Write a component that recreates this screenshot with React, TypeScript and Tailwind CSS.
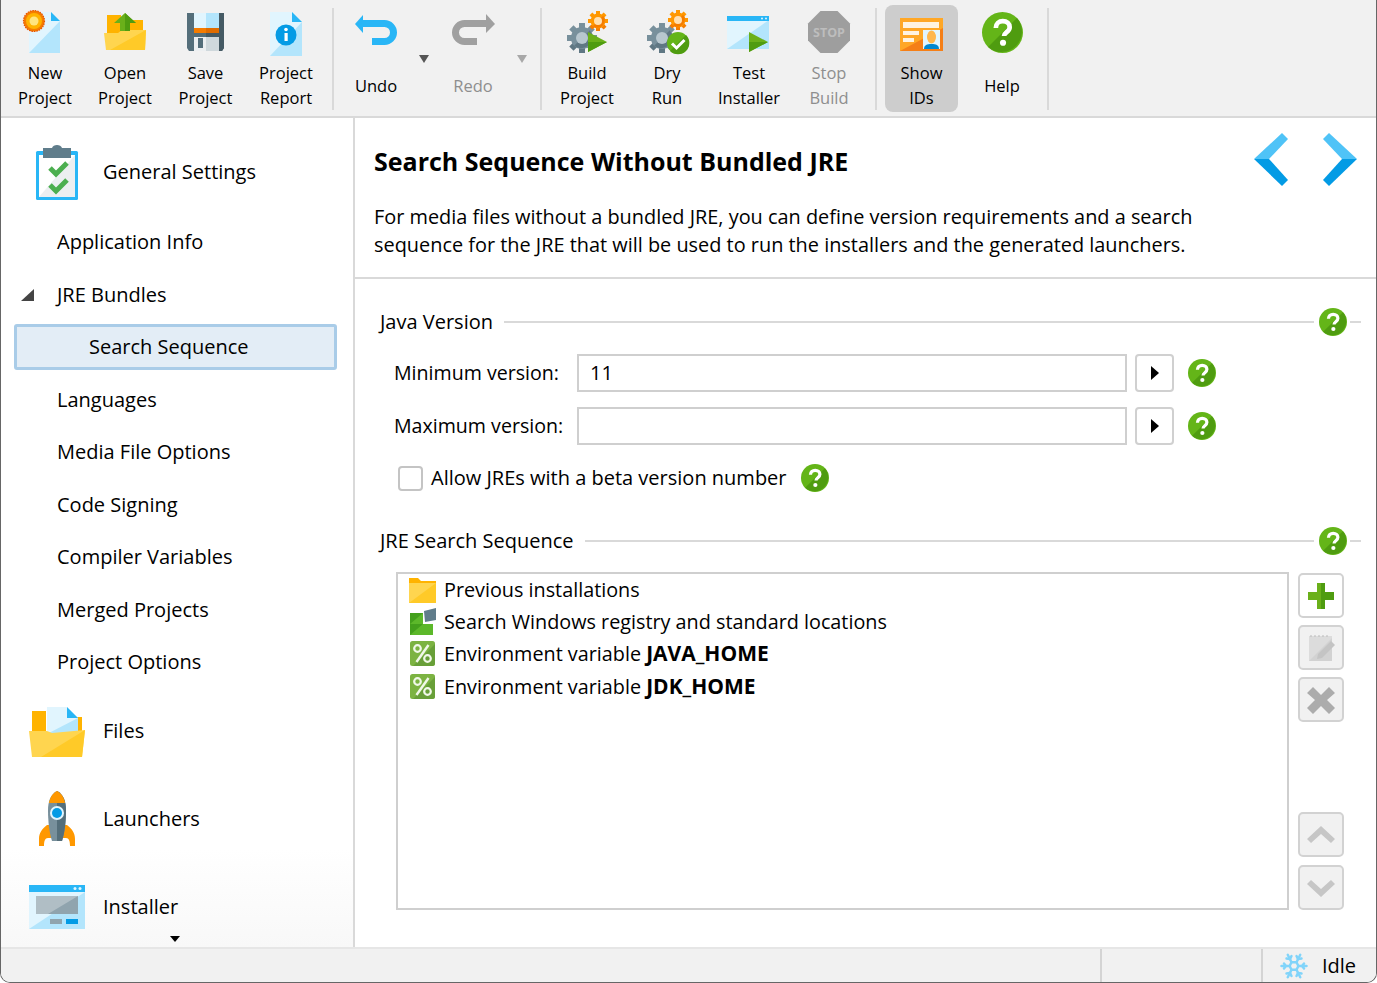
import { Snowflake } from 'lucide-react'
import type { ReactNode } from 'react'

const ANGLES = [0, 45, 90, 135, 180, 225, 270, 315]

function Gear({ cx, cy, r, fill, dark, hole }: { cx: number; cy: number; r: number; fill: string; dark: string; hole: string }) {
  return (
    <g>
      {ANGLES.map((a) => (
        <rect key={a} x={cx - r * 0.2} y={cy - r} width={r * 0.4} height={r * 0.4} fill={a > 90 && a < 270 ? dark : fill} transform={`rotate(${a} ${cx} ${cy})`} />
      ))}
      <circle cx={cx} cy={cy} r={r * 0.74} fill={fill} />
      <path d={`M${cx + r * 0.52} ${cy - r * 0.52}A${r * 0.74} ${r * 0.74} 0 0 1 ${cx - r * 0.52} ${cy + r * 0.52}Z`} fill={dark} />
      <circle cx={cx} cy={cy} r={r * 0.4} fill={hole} />
    </g>
  )
}

function HelpDot({ size = 28 }: { size?: number }) {
  return (
    <svg width={size} height={size} viewBox="0 0 40 40" className="shrink-0">
      <circle cx="20" cy="20" r="20" fill="#64b518" />
      <path d="M34.100 5.900A20 20 0 0 1 5.900 34.100Z" fill="#4f9c10" />
      <path d="M13.500 15.500c0-4 3-6.500 6.800-6.500 3.900 0 6.700 2.400 6.700 5.800 0 4.700-5.500 4.800-5.500 8.700" fill="none" stroke="#fff" strokeWidth="4.600" />
      <circle cx="20.500" cy="30" r="3" fill="#fff" />
    </svg>
  )
}

function Doc({ children }: { children?: ReactNode }) {
  return (
    <>
      <path d="M8 4h22l9 9v32H8Z" fill="#e1f5fe" />
      <path d="M8 45 39 13v32Z" fill="#b3e5fc" />
      <path d="M30 4l9 9h-9Z" fill="#29b6f6" />
      {children}
    </>
  )
}

const icons: Record<string, ReactNode> = {
  new: (
    <Doc>
      <circle cx="13" cy="13" r="10.500" fill="#f57c00" strokeDasharray="1.500 1" stroke="#e65100" strokeWidth="1.200" />
      <circle cx="13" cy="13" r="8" fill="#ffb300" />
      <circle cx="13" cy="13" r="4.500" fill="#ffe57f" />
    </Doc>
  ),
  open: (
    <>
      <path d="M6 7h14v5h22v14H6Z" fill="#ffb300" />
      <path d="M3 25h14l4-3h24l-1 20H5Z" fill="#ffd54f" />
      <path d="M45 22 44 42H9Z" fill="#ffca28" />
      <path d="M24 5l11 10h-6v8h-10v-8h-6Z" fill="#6ab01a" />
      <path d="M24 5l11 10h-6v8h-5Z" fill="#4f9c10" />
    </>
  ),
  save: (
    <>
      <path d="M5 5h37v35l-2 3H7l-2-3Z" fill="#546e7a" />
      <path d="M24 5h18v35l-2 3H24Z" fill="#455a64" />
      <rect x="12" y="5" width="12" height="20" fill="#e1f5fe" />
      <rect x="24" y="5" width="13" height="20" fill="#b3e5fc" />
      <rect x="12" y="20" width="12" height="5" fill="#f57c00" />
      <rect x="24" y="20" width="13" height="5" fill="#e06c00" />
      <rect x="12" y="29" width="12" height="14" fill="#eceff1" />
      <rect x="24" y="29" width="13" height="14" fill="#cfd8dc" />
      <rect x="16" y="30" width="5" height="10" fill="#546e7a" />
    </>
  ),
  report: (
    <>
      <path d="M8 4h22l10 10v34H8Z" fill="#e1f5fe" />
      <path d="M8 48 40 14v34Z" fill="#b3e5fc" />
      <path d="M30 4l10 10H30Z" fill="#29b6f6" />
      <circle cx="24" cy="27" r="10.500" fill="#039be5" />
      <circle cx="24" cy="21.500" r="1.800" fill="#fff" />
      <rect x="22.500" y="25" width="3.200" height="8" fill="#fff" />
    </>
  ),
  undo: (
    <>
      <path d="M10 15.500h22.500a9 9 0 0 1 0 18H20" fill="none" stroke="#29b6f6" strokeWidth="7" />
      <path d="M3 16 11 7v18Z" fill="#29b6f6" />
    </>
  ),
  redo: (
    <>
      <path d="M38 15.500H15.500a9 9 0 0 0 0 18H28" fill="none" stroke="#a0a0a0" strokeWidth="7" />
      <path d="M46 16 37 6v19Z" fill="#a0a0a0" />
    </>
  ),
  build: (
    <>
      <Gear cx={19} cy={30} r={15} fill="#78909c" dark="#5f7783" hole="#b8c7cf" />
      <Gear cx={35} cy={13} r={10} fill="#ff9800" dark="#f57c00" hole="#ffe0b2" />
      <path d="M25 24 44 34 25 44Z" fill="#6ab01a" />
      <path d="M25 44 44 34H25Z" fill="#4f9c10" />
    </>
  ),
  dry: (
    <>
      <Gear cx={19} cy={30} r={15} fill="#78909c" dark="#5f7783" hole="#b8c7cf" />
      <Gear cx={35} cy={12} r={10} fill="#ff9800" dark="#f57c00" hole="#ffe0b2" />
      <circle cx="35" cy="35" r="11" fill="#64b518" />
      <path d="M43 27A11 11 0 0 1 27 43Z" fill="#4f9c10" />
      <path d="M29 35.500l4.500 4.500 8-8" fill="none" stroke="#fff" strokeWidth="3" />
    </>
  ),
  test: (
    <>
      <rect x="2" y="8" width="42" height="33" fill="#e1f5fe" />
      <path d="M2 41 44 12v29Z" fill="#b3e5fc" />
      <rect x="2" y="8" width="42" height="5" fill="#29b6f6" />
      <circle cx="37" cy="10.500" r="1" fill="#e1f5fe" />
      <circle cx="41" cy="10.500" r="1" fill="#e1f5fe" />
      <path d="M24 24 43 34 24 44Z" fill="#6ab01a" />
      <path d="M24 44 43 34H24Z" fill="#4f9c10" />
    </>
  ),
  stop: (
    <>
      <path d="M15.500 3h17L45 15.500v17L32.500 45h-17L3 32.500v-17Z" fill="#9e9e9e" />
      <text x="24" y="28.500" textAnchor="middle" fontSize="12.500" fontWeight="700" fill="#bdbdbd" fontFamily="'Open Sans', sans-serif">STOP</text>
    </>
  ),
  ids: (
    <>
      <rect x="2" y="10" width="43" height="33" fill="#ffa726" />
      <path d="M2 43 45 20v23Z" fill="#f57f17" />
      <rect x="5" y="14" width="36" height="6" fill="#fff3e0" />
      <rect x="5" y="23" width="16" height="4" fill="#fff3e0" />
      <rect x="5" y="30" width="11" height="4" fill="#fff3e0" />
      <rect x="25" y="22" width="17" height="19" fill="#e1f5fe" />
      <ellipse cx="33.500" cy="29" rx="4.500" ry="6.500" fill="#ffb74d" />
      <path d="M26 41c0-4 3-5 7.500-5s7.500 1 7.500 5Z" fill="#0288d1" />
    </>
  ),
}

function ToolIcon({ name }: { name: string }) {
  return (
    <svg width="48" height="48" viewBox="0 0 48 48">
      {icons[name]}
    </svg>
  )
}

function ToolButton({ icon, label, width, off, active }: { icon: string; label: ReactNode; width: string; off?: boolean; active?: boolean }) {
  return (
    <div className={`flex flex-col items-center ${width} ${active ? 'mt-[5px] h-[107px] rounded-lg bg-[#cdcdcd] pt-[3px]' : 'pt-2'}`}>
      {icon === 'help' ? (
        <div className="flex h-12 w-12 items-center justify-center">
          <HelpDot size={41} />
        </div>
      ) : (
        <ToolIcon name={icon} />
      )}
      <div className={`mt-[4px] flex h-[50px] items-center text-center text-[16.500px] leading-[25px] ${off ? 'text-[#8e8e8e]' : 'text-black'}`}>
        <span>{label}</span>
      </div>
    </div>
  )
}

const Sep = ({ className }: { className: string }) => <div className={`mt-2 h-[102px] w-[2px] shrink-0 bg-[#d9d9d9] ${className}`} />

function Drop({ off, className }: { off?: boolean; className: string }) {
  return (
    <div className={`flex w-4 shrink-0 justify-center pt-[55px] ${className}`}>
      <div className={`h-0 w-0 border-x-[5px] border-t-[8px] border-x-transparent ${off ? 'border-t-[#a8a8a8]' : 'border-t-[#555]'}`} />
    </div>
  )
}

const NAV = ['Application Info', 'JRE Bundles', 'Search Sequence', 'Languages', 'Media File Options', 'Code Signing', 'Compiler Variables', 'Merged Projects', 'Project Options']

function NavRow({ label }: { label: string }) {
  if (label === 'Search Sequence') {
    return (
      <div className="flex h-[52.500px] items-center">
        <div className="ml-[13px] -mt-px flex h-[46px] w-[323px] items-center rounded-[3px] border-[3px] border-[#a9cce8] bg-[#e3edf6] pl-[72px] text-black">{label}</div>
      </div>
    )
  }
  return (
    <div className="relative flex h-[52.500px] items-center pl-[56px] text-black">
      {label === 'JRE Bundles' && (
        <svg width="13" height="12" viewBox="0 0 13 12" className="absolute left-[20px] top-[20px]">
          <path d="M13 0v12H0Z" fill="#444" />
        </svg>
      )}
      {label}
    </div>
  )
}

function GroupIcon({ children, h = 60 }: { children: ReactNode; h?: number }) {
  return (
    <svg width="56" height={h} viewBox={`0 0 56 ${h}`} className="shrink-0">
      {children}
    </svg>
  )
}

function GroupRow({ icon, label, className = '' }: { icon: ReactNode; label: string; className?: string }) {
  return (
    <div className={`flex h-[60px] items-center pl-[28px] text-black ${className}`}>
      {icon}
      <span className="ml-[18px]">{label}</span>
    </div>
  )
}

function GroupTitle({ label }: { label: string }) {
  return (
    <div className="ml-[25px] mr-[15px] flex h-[28px] items-center text-black">
      <span>{label}</span>
      <div className="ml-[11px] h-[2px] flex-1 bg-[#d9d9d9]" />
      <div className="ml-[5px] mr-[3px]">
        <HelpDot />
      </div>
      <div className="h-[2px] w-[11px] bg-[#d9d9d9]" />
    </div>
  )
}

function VersionRow({ label, value, className }: { label: string; value?: string; className: string }) {
  return (
    <div className={`ml-[39px] flex items-center ${className}`}>
      <span className="w-[183px] shrink-0 text-[19.600px] text-black">{label}</span>
      <div className="flex h-[38px] w-[550px] items-center border-2 border-[#cfcfcf] pl-[11px] text-black">{value}</div>
      <div className="ml-[8px] flex h-[38px] w-[39px] items-center justify-center rounded-[4px] border-2 border-[#d0d0d0]">
        <div className="h-0 w-0 border-y-[7px] border-l-[8px] border-y-transparent border-l-black" />
      </div>
      <div className="ml-[14px]">
        <HelpDot />
      </div>
    </div>
  )
}

function SideButton({ children, on, className = '' }: { children: ReactNode; on?: boolean; className?: string }) {
  return (
    <div className={`flex h-[45px] w-[46px] items-center justify-center rounded-[5px] border-2 border-[#d2d2d2] ${on ? 'bg-white' : 'bg-[#f1f1f1]'} ${className}`}>
      <svg width="30" height="30" viewBox="0 0 30 30">
        {children}
      </svg>
    </div>
  )
}

const Percent = () => (
  <svg width="27" height="25" viewBox="-1 0 27 25" className="shrink-0">
    <rect width="25" height="25" rx="2.500" fill="#7cb342" />
    <path d="M25 3v19a3 3 0 0 1-3 3H3Z" fill="#689f38" />
    <circle cx="7.500" cy="7.500" r="3.300" fill="none" stroke="#f1f8e9" strokeWidth="2.200" />
    <circle cx="17.500" cy="17.500" r="3.300" fill="none" stroke="#f1f8e9" strokeWidth="2.200" />
    <path d="M18.500 4 6.500 21" stroke="#f1f8e9" strokeWidth="2.400" />
  </svg>
)

export default function App() {
  return (
    <div className="flex h-[983px] w-[1377px] flex-col overflow-hidden rounded-b-[10px] border-x border-b border-[#666] bg-white font-['Open_Sans',sans-serif] text-[20px]">
      {/* toolbar */}
      <div className="flex h-[118px] shrink-0 border-b-2 border-[#d9d9d9] bg-[#f1f1f1] pl-[4px]">
        <ToolButton icon="new" width="w-[80px]" label={<>New<br />Project</>} />
        <ToolButton icon="open" width="w-[80px]" label={<>Open<br />Project</>} />
        <ToolButton icon="save" width="w-[81px]" label={<>Save<br />Project</>} />
        <ToolButton icon="report" width="w-[80px]" label={<>Project<br />Report</>} />
        <Sep className="ml-[6px]" />
        <ToolButton icon="undo" width="w-[80px] ml-[2px]" label="Undo" />
        <Drop className="" />
        <ToolButton icon="redo" width="w-[80px] ml-[1px]" label="Redo" off />
        <Drop off className="ml-px" />
        <Sep className="ml-[10px]" />
        <ToolButton icon="build" width="w-[80px] ml-[5px]" label={<>Build<br />Project</>} />
        <ToolButton icon="dry" width="w-[80px]" label={<>Dry<br />Run</>} />
        <ToolButton icon="test" width="w-[80px] ml-[2px]" label={<>Test<br />Installer</>} />
        <ToolButton icon="stop" width="w-[80px]" label={<>Stop<br />Build</>} off />
        <Sep className="ml-[6px]" />
        <ToolButton icon="ids" width="w-[73px] ml-[8px]" label={<>Show<br />IDs</>} active />
        <ToolButton icon="help" width="w-[80px] ml-[4px]" label="Help" />
        <Sep className="ml-[5px]" />
      </div>

      <div className="flex min-h-0 flex-1">
        {/* sidebar */}
        <div className="flex w-[354px] shrink-0 flex-col border-r-2 border-[#d9d9d9]">
          <GroupRow
            className="mt-[24px]"
            label="General Settings"
            icon={
              <GroupIcon>
                <rect x="7" y="9" width="42" height="49" rx="1.500" fill="#29b6f6" />
                <rect x="10" y="13" width="36" height="42" fill="#fff" />
                <path d="M46 13v42H10Z" fill="#eceff1" />
                <path d="M14 6h9c1-4 9-4 10 0h9v10H14Z" fill="#607d8b" />
                <path d="M21 26l6 6 11-11M21 43l6 6 11-11" fill="none" stroke="#4caf50" strokeWidth="5" />
              </GroupIcon>
            }
          />
          <div className="mt-[14px]">
            {NAV.map((n) => (
              <NavRow key={n} label={n} />
            ))}
          </div>
          <GroupRow
            className="mt-[12px]"
            label="Files"
            icon={
              <GroupIcon>
                <path d="M3 10h14v22H3ZM44 16h9v16h-9Z" fill="#ffb300" />
                <path d="M18 6h20l11 11v16H18Z" fill="#e1f5fe" />
                <path d="M18 33 49 17v16Z" fill="#b3e5fc" />
                <path d="M38 6l11 11H38Z" fill="#29b6f6" />
                <path d="M0 30h18l5 2 33-3-3 27H3Z" fill="#ffd54f" />
                <path d="M56 29 53 56H12Z" fill="#ffca28" />
              </GroupIcon>
            }
          />
          <GroupRow
            className="mt-[28px]"
            label="Launchers"
            icon={
              <GroupIcon>
                <path d="M10 57v-7c0-6 3-10 8-14l20 0c5 4 8 8 8 14v7h-5c0-5-1-8-4-8H19c-3 0-4 3-4 8Z" fill="#ff9800" />
                <path d="M28 2c6 3 9 10 9 19 0 10-1 22-4 31h-10c-3-9-4-21-4-31 0-9 3-16 9-19Z" fill="#78909c" />
                <path d="M28 2c6 3 9 10 9 19 0 10-1 22-4 31h-5Z" fill="#546e7a" />
                <path d="M28 2c4 2 7 6 8 12H20c1-6 4-10 8-12Z" fill="#ff9800" />
                <circle cx="28" cy="24" r="7" fill="#e1f5fe" />
                <circle cx="28" cy="24" r="5" fill="#039be5" />
              </GroupIcon>
            }
          />
          <div className="flex min-h-0 flex-1 flex-col items-center bg-gradient-to-b from-white to-[#f8f8f8]">
            <GroupRow
              className="mt-[28px] w-full"
              label="Installer"
              icon={
                <GroupIcon h={44}>
                  <rect y="0" width="56" height="44" fill="#e1f5fe" />
                  <path d="M0 44 56 7v37Z" fill="#b3e5fc" />
                  <rect width="56" height="7" fill="#29b6f6" />
                  <circle cx="46" cy="3.500" r="1.500" fill="#e1f5fe" />
                  <circle cx="51" cy="3.500" r="1.500" fill="#e1f5fe" />
                  <rect x="7" y="11" width="42" height="18" fill="#b0bec5" />
                  <path d="M19 29 49 11v18Z" fill="#90a4ae" />
                  <rect x="21" y="34" width="12" height="5" fill="#90a4ae" />
                  <rect x="37" y="34" width="12" height="5" fill="#039be5" />
                </GroupIcon>
              }
            />
            <div className="ml-[-4px] mt-[-1px] h-0 w-0 border-x-[5.500px] border-t-[6px] border-x-transparent border-t-black" />
          </div>
        </div>

        {/* main */}
        <div className="flex min-w-0 flex-1 flex-col">
          <div className="flex h-[161px] shrink-0 justify-between border-b-2 border-[#d9d9d9] pl-[19px] pr-[19px]">
            <div>
              <h1 className="mt-[26px] text-[25px] font-bold leading-[34px] text-black">Search Sequence Without Bundled JRE</h1>
              <p className="mt-[25px] text-[19.900px] leading-[28px] text-black">
                For media files without a bundled JRE, you can define version requirements and a search
                <br />
                sequence for the JRE that will be used to run the installers and the generated launchers.
              </p>
            </div>
            <div className="flex shrink-0 gap-[35px] pt-[15px]">
              <svg width="34" height="54" viewBox="0 0 34 54">
                <path d="M28 0 34 6 15 26H0Z" fill="#4fc3f7" />
                <path d="M0 26H15L34 47 28 53Z" fill="#039be5" />
              </svg>
              <svg width="34" height="54" viewBox="0 0 34 54">
                <path d="M6 0 0 6 19 26H34Z" fill="#4fc3f7" />
                <path d="M34 26H19L0 47 6 53Z" fill="#039be5" />
              </svg>
            </div>
          </div>

          <div className="mt-[29px]">
            <GroupTitle label="Java Version" />
          </div>
          <VersionRow className="mt-[18px]" label="Minimum version:" value="11" />
          <VersionRow className="mt-[15px]" label="Maximum version:" />
          <div className="ml-[43px] mt-[20px] flex h-[26px] items-center text-black">
            <div className="h-[25px] w-[25px] rounded-[4px] border-2 border-[#c4c4c4]" />
            <span className="ml-[8px]">Allow JREs with a beta version number</span>
            <div className="ml-[14px]">
              <HelpDot />
            </div>
          </div>

          <div className="mt-[36px]">
            <GroupTitle label="JRE Search Sequence" />
          </div>
          <div className="ml-[41px] mt-[17px] flex h-[338px]">
            <div className="w-[893px] border-2 border-[#cfcfcf] pl-[11px] text-[19.800px] text-black">
              <div className="flex h-[32px] items-center gap-[8px]">
                <svg width="27" height="25" viewBox="0 0 27 25" className="shrink-0">
                  <path d="M0 0h9l3 3h15v22H0Z" fill="#ffb300" />
                  <path d="M0 5h27v20H0Z" fill="#ffd54f" />
                  <path d="M27 5v20H0Z" fill="#ffca28" />
                </svg>
                Previous installations
              </div>
              <div className="flex h-[31px] items-center gap-[8px]">
                <svg width="27" height="27" viewBox="-1 0 27 27" className="shrink-0">
                  <path d="M0 5h13v11h10v11H0Z" fill="#43a01c" />
                  <path d="M0 27 13 16h10v11ZM0 16 13 5v11Z" fill="#5cb82a" />
                  <path d="M14 3 26 0v12l-11 2Z" fill="#607d8b" />
                </svg>
                Search Windows registry and standard locations
              </div>
              <div className="flex h-[33px] items-center gap-[8px]">
                <Percent />
                <span>Environment variable <b className="text-[21px]">JAVA_HOME</b></span>
              </div>
              <div className="flex h-[33px] items-center gap-[8px]">
                <Percent />
                <span>Environment variable <b className="text-[21px]">JDK_HOME</b></span>
              </div>
            </div>
            <div className="ml-[9px] flex flex-col pt-px">
              <SideButton on>
                <path d="M11 2h8v9h9v8h-9v9h-8v-9H2v-8h9Z" fill="#6ab01a" />
                <path d="M15 2h4v9h9v8h-9v9h-4Z" fill="#4f9c10" />
              </SideButton>
              <SideButton className="mt-[7px]">
                <path d="M3 3h23v25H3Z" fill="#dcdcdc" />
                <path d="M3 28 26 5v23Z" fill="#d2d2d2" />
                <path d="M5 2v2M9 2v2M13 2v2M17 2v2M21 2v2" stroke="#bbb" />
                <path d="M12 21 25 8l4 4-13 13-5 1Z" fill="#c4c4c4" />
              </SideButton>
              <SideButton className="mt-[7px]">
                <path d="M7 2 15 10l8-8 6 6-8 7 8 8-6 6-8-8-8 8-6-6 8-8-8-7Z" fill="#acacac" />
              </SideButton>
              <SideButton className="mt-auto">
                <path d="M15 6 29 19l-4 4-10-9-10 9-4-4Z" fill="#c6c6c6" />
              </SideButton>
              <SideButton className="mt-[8px]">
                <path d="M15 24 29 11l-4-4-10 9L5 7l-4 4Z" fill="#c6c6c6" />
              </SideButton>
            </div>
          </div>
        </div>
      </div>

      {/* status bar */}
      <div className="flex h-[35px] shrink-0 justify-end border-t-2 border-[#e6e6e6] bg-[#f1f1f1]">
        <div className="w-[161px] border-l-2 border-[#d4d4d4]" />
        <div className="flex w-[115px] items-center border-l-2 border-[#d4d4d4] pl-[16px] text-black">
          <Snowflake size={30} color="#81d4fa" strokeWidth={2} />
          <span className="ml-[13px]">Idle</span>
        </div>
      </div>
    </div>
  )
}
